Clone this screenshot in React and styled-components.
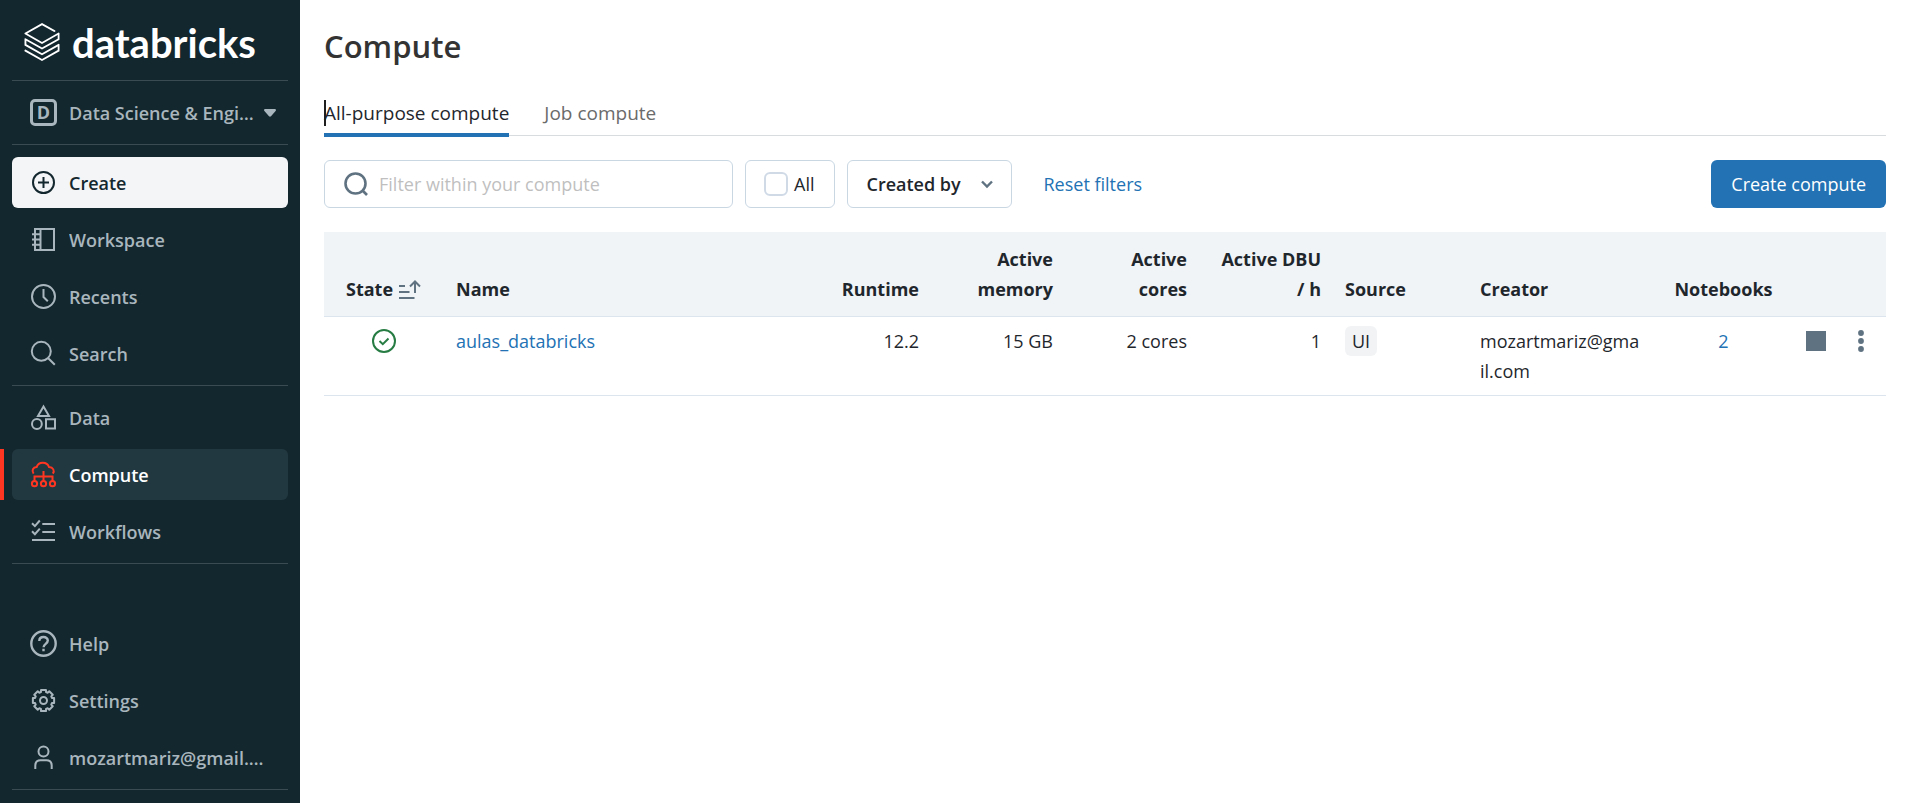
import React from 'react'
import styled, { createGlobalStyle } from 'styled-components'
import { SiDatabricks } from 'react-icons/si'

const GlobalStyle = createGlobalStyle`
  *, *::before, *::after {
    box-sizing: border-box;
  }

  body {
    margin: 0;
    background: #fff;
    color: #1f272d;
    font: 400 18px/30px 'Open Sans', 'Noto Sans', sans-serif;
  }

  button, input, select {
    font: inherit;
    color: inherit;
  }

  a {
    color: #2272b4;
    text-decoration: none;
  }

  svg {
    display: block;
    flex: none;
  }
`

const Page = styled.div`
  display: flex;
  min-height: 100vh;
`

/* sidebar */

const Sidebar = styled.aside`
  display: flex;
  flex-direction: column;
  flex: none;
  width: 300px;
  padding: 0 12px 13px;
  background: #13272e;
  color: #a9b6bd;
`

const Brand = styled.a`
  display: flex;
  align-items: center;
  gap: 11px;
  height: 80px;
  padding: 4px 11px 0;
  color: #fff;
`

const BrandName = styled.span`
  padding-top: 2px;
  font: 700 40px/40px Lato, sans-serif;
`

const Divider = styled.hr`
  flex: none;
  width: 100%;
  height: 1px;
  margin: 0;
  border: 0;
  background: #3a4b52;
`

const Switcher = styled.button`
  display: flex;
  align-items: center;
  gap: 3px;
  height: 63px;
  padding: 0 12px 0 18px;
  border: 0;
  background: none;
  font-weight: 600;
  text-align: left;
  cursor: pointer;
`

const Badge = styled.span`
  flex: none;
  width: 27px;
  height: 27px;
  margin-right: 9px;
  border: 3px solid;
  border-radius: 5px;
  font-weight: 700;
  line-height: 21px;
  text-align: center;
`

const Truncated = styled.span`
  min-width: 0;
  overflow: hidden;
  white-space: nowrap;
  text-overflow: ellipsis;
`

const Nav = styled.nav`
  display: flex;
  flex-direction: column;
  gap: 6px;
  padding-top: ${(props) => (props.$first ? '12px' : '0')};
  margin-top: ${(props) => (props.$bottom ? 'auto' : '0')};
`

const NavItem = styled.a`
  position: relative;
  display: flex;
  align-items: center;
  gap: 12px;
  height: 51px;
  padding: 0 18px;
  border-radius: 6px;
  color: ${(props) => (props.$active ? '#fff' : '#a9b6bd')};
  background: ${(props) => (props.$active ? '#223841' : 'none')};
  font-weight: 600;

  svg {
    color: ${(props) => (props.$active ? '#ff3621' : 'inherit')};
  }

  &::before {
    content: '';
    display: ${(props) => (props.$active ? 'block' : 'none')};
    position: absolute;
    top: 0;
    bottom: 0;
    left: -12px;
    width: 4px;
    background: #ff3621;
  }
`

const CreateItem = styled(NavItem).attrs({ as: 'button' })`
  border: 0;
  background: #f4f5f7;
  color: #13272e;
  text-align: left;
  cursor: pointer;
`

/* main area */

const Main = styled.main`
  flex: 1;
  min-width: 0;
  padding: 24px 33px 24px 24px;
`

const Title = styled.h1`
  margin: 0;
  color: #333;
  font-size: 31px;
  font-weight: 600;
  line-height: 44px;
`

const Tabs = styled.div`
  display: flex;
  gap: 35px;
  height: 48px;
  margin-top: 20px;
  border-bottom: 1px solid #d9dcdf;
`

const Tab = styled.button`
  position: relative;
  height: 49px;
  padding: 5px 0 0;
  border: 0;
  border-bottom: 4px solid ${(props) => (props.$selected ? '#2272b4' : 'transparent')};
  background: none;
  color: ${(props) => (props.$selected ? '#1f272d' : '#6b6b6b')};
  font-size: 19px;
  cursor: pointer;
`

const Caret = styled.i`
  position: absolute;
  top: 12px;
  left: 0;
  width: 2px;
  height: 26px;
  background: #1f1f1f;
`

const Toolbar = styled.div`
  display: flex;
  align-items: center;
  gap: 12px;
  margin: 24px 0;
`

const Box = styled.label`
  display: flex;
  align-items: center;
  height: 48px;
  border: 1px solid #c9d7e3;
  border-radius: 6px;
  background: #fff;
`

const SearchBox = styled(Box)`
  flex: 0 1 409px;
  gap: 10px;
  padding: 0 18px;
  color: #5f7281;
`

const SearchInput = styled.input`
  flex: 1;
  min-width: 0;
  padding: 0;
  border: 0;
  outline: 0;
  background: none;
  color: #1f272d;

  &::placeholder {
    color: #bfbfbf;
    opacity: 1;
  }
`

const CheckBox = styled(Box)`
  gap: 6px;
  padding: 0 20px 0 18px;
`

const Tick = styled.input`
  appearance: none;
  width: 24px;
  height: 24px;
  margin: 0;
  border: 2px solid #d0dae6;
  border-radius: 6px;
`

const SelectBox = styled(Box)`
  gap: 20px;
  padding: 0 18px;
  color: #5f7281;
`

const Select = styled.select`
  appearance: none;
  padding: 0;
  border: 0;
  outline: 0;
  background: none;
  color: #1f272d;
  font-weight: 600;
`

const ResetButton = styled.button`
  padding: 0 19px;
  border: 0;
  background: none;
  color: #2272b4;
  cursor: pointer;
`

const PrimaryButton = styled.button`
  height: 48px;
  margin-left: auto;
  padding: 0 20px;
  border: 0;
  border-radius: 6px;
  background: #2272b4;
  color: #fff;
  cursor: pointer;
`

const Table = styled.table`
  width: 100%;
  table-layout: fixed;
  border-collapse: separate;
  border-spacing: 0;
`

const Th = styled.th`
  width: ${(props) => props.$width || 'auto'};
  padding: 12px;
  padding-left: ${(props) => (props.$align === 'right' ? '18px' : '12px')};
  border-bottom: 1px solid #dce5ee;
  background: #f0f4f7;
  font-weight: 700;
  text-align: ${(props) => props.$align || 'left'};
  vertical-align: bottom;
`

const Td = styled.td`
  padding: 9px 12px;
  border-bottom: 1px solid #dce5ee;
  text-align: ${(props) => props.$align || 'left'};
  vertical-align: top;
  overflow-wrap: anywhere;
`

const SortButton = styled.button`
  display: flex;
  align-items: center;
  gap: 6px;
  padding: 0 0 0 10px;
  border: 0;
  background: none;
  cursor: pointer;

  svg {
    color: #5f7281;
  }
`

const Status = styled.span`
  display: flex;
  align-items: center;
  justify-content: center;
  height: 30px;
  color: #277c43;
`

const Tag = styled.span`
  display: inline-block;
  padding: 0 7px;
  border-radius: 6px;
  background: #f1f3f5;
`

const Actions = styled.div`
  display: flex;
  align-items: center;
  justify-content: space-between;
  height: 30px;
  padding-right: 2px;
`

const IconButton = styled.button`
  padding: 0;
  border: 0;
  background: none;
  color: #5f7281;
  cursor: pointer;
`

/* icons, 27px grid for the sidebar */

const Icon = ({ size = 27, width = 2, children }) => (
  <svg
    width={size}
    height={size}
    viewBox={`0 0 ${size} ${size}`}
    fill="none"
    stroke="currentColor"
    strokeWidth={width}
    aria-hidden="true"
  >
    {children}
  </svg>
)

const CreateIcon = () => (
  <Icon>
    <circle cx="13.5" cy="13.5" r="10.5" />
    <path d="M13.5 8v11M8 13.5h11" />
  </Icon>
)

const WorkspaceIcon = () => (
  <Icon>
    <path d="M5 3h19v21H5zM10.5 3v21M2 8.2h8.5M2 13.5h8.5M2 18.8h8.5" />
  </Icon>
)

const RecentsIcon = () => (
  <Icon>
    <circle cx="13.5" cy="13.5" r="11.5" />
    <path d="M13.5 6v8l4.3 4.3" />
  </Icon>
)

const SearchIcon = () => (
  <Icon>
    <circle cx="11.3" cy="11.3" r="9.5" />
    <path d="M18 18l6.8 6.8" />
  </Icon>
)

const DataIcon = () => (
  <Icon>
    <path d="M13.5 2.5L8 12h11z" />
    <circle cx="6.9" cy="20" r="4.9" />
    <path d="M16 15.3h9v9.2h-9z" />
  </Icon>
)

const ComputeIcon = () => (
  <Icon>
    <path d="M3.6 12.7C1.2 9.4 3.2 6.3 6.6 6.1 8.4.3 17 .2 19 6c4.2.2 6 3.9 3.8 6.7" />
    <path d="M13.5 10v10M4.5 20v-4.6h18V20" />
    <circle cx="4.5" cy="22.7" r="2.6" />
    <circle cx="13.5" cy="22.7" r="2.6" />
    <circle cx="22.5" cy="22.7" r="2.6" />
  </Icon>
)

const WorkflowsIcon = () => (
  <Icon>
    <path d="M2 5.2l2.9 2.9L9.8 2.5M2 13.3l2.9 2.9 4.9-5.6M12.3 6H25M12.3 14H25M2 22h23" />
  </Icon>
)

const HelpIcon = () => (
  <Icon width={2.4}>
    <circle cx="13.5" cy="13.5" r="12.2" />
    <path d="M9.3 10.9c0-5.2 8.5-5 8.5-.3 0 3.3-4.2 3.2-4.2 6.6M13.5 18.8v2.5" />
  </Icon>
)

// eight teeth, four corners each: [degrees from the tooth's middle, radius]
const toothCorners = [[-13, 10.9], [13, 10.9], [17, 8.8], [28, 8.8]]

const gearPoints = Array.from({ length: 8 }, (_, tooth) =>
  toothCorners.map(([offset, radius]) => {
    const angle = ((tooth * 45 + offset) * Math.PI) / 180
    return `${13.5 + radius * Math.sin(angle)},${13.5 - radius * Math.cos(angle)}`
  })
)
  .flat()
  .join(' ')

const SettingsIcon = () => (
  <Icon>
    <polygon points={gearPoints} strokeLinejoin="round" />
    <circle cx="13.5" cy="13.5" r="3.5" />
  </Icon>
)

const UserIcon = () => (
  <Icon>
    <circle cx="13.5" cy="7.5" r="5" />
    <path d="M5.3 25v-3.5c0-3.2 2-5.2 5.2-5.2h6c3.2 0 5.2 2 5.2 5.2V25" />
  </Icon>
)

const mainLinks = [
  { label: 'Workspace', icon: WorkspaceIcon },
  { label: 'Recents', icon: RecentsIcon },
  { label: 'Search', icon: SearchIcon },
]

const dataLinks = [
  { label: 'Data', icon: DataIcon },
  { label: 'Compute', icon: ComputeIcon, active: true },
  { label: 'Workflows', icon: WorkflowsIcon },
]

const userLinks = [
  { label: 'Help', icon: HelpIcon },
  { label: 'Settings', icon: SettingsIcon },
  { label: 'mozartmariz@gmail.com', icon: UserIcon },
]

const clusters = [
  {
    name: 'aulas_databricks',
    runtime: '12.2',
    memory: '15 GB',
    cores: '2 cores',
    dbu: '1',
    source: 'UI',
    creator: 'mozartmariz@gmail.com',
    notebooks: 2,
  },
]

const NavLinks = ({ items }) =>
  items.map(({ label, icon: ItemIcon, active }) => (
    <NavItem key={label} href="#" $active={active} aria-current={active ? 'page' : undefined}>
      <ItemIcon />
      <Truncated>{label}</Truncated>
    </NavItem>
  ))

const SideMenu = () => (
  <Sidebar>
    <Brand href="#">
      <SiDatabricks size={38} aria-hidden="true" />
      <BrandName>databricks</BrandName>
    </Brand>
    <Divider />
    <Switcher type="button">
      <Badge aria-hidden="true">D</Badge>
      <Truncated>Data Science &amp; Engineering</Truncated>
      <svg width="12" height="8" viewBox="0 0 12 8" fill="currentColor" aria-hidden="true">
        <path d="M1.2 0h9.6c1 0 1.5 1.2.8 1.9L7 7.2c-.6.6-1.4.6-2 0L.4 1.9C-.3 1.2.2 0 1.2 0z" />
      </svg>
    </Switcher>
    <Divider />
    <Nav $first>
      <CreateItem type="button">
        <CreateIcon />
        Create
      </CreateItem>
      <NavLinks items={mainLinks} />
      <Divider />
      <NavLinks items={dataLinks} />
      <Divider />
    </Nav>
    <Nav $bottom>
      <NavLinks items={userLinks} />
      <Divider />
    </Nav>
  </Sidebar>
)

const Filters = () => (
  <Toolbar>
    <SearchBox>
      <Icon size={26} width={2.6}>
        <circle cx="12.5" cy="12.5" r="10" />
        <path d="M19.5 19.5l4.5 4.5" />
      </Icon>
      <SearchInput type="search" aria-label="Filter" placeholder="Filter within your compute" />
    </SearchBox>
    <CheckBox>
      <Tick type="checkbox" />
      All
    </CheckBox>
    <SelectBox>
      <Select aria-label="Created by">
        <option>Created by</option>
      </Select>
      <Icon size={12} width={2.4}>
        <path d="M1 3.5l5 5 5-5" />
      </Icon>
    </SelectBox>
    <ResetButton type="button">Reset filters</ResetButton>
    <PrimaryButton type="button">Create compute</PrimaryButton>
  </Toolbar>
)

const ClusterTable = () => (
  <Table>
    <thead>
      <tr>
        <Th $width="120px">
          <SortButton type="button">
            State
            <Icon size={22}>
              <path d="M0 8h6M0 14h10.5M0 20h15.500M16 15V4M11 8.500L16 3.500l5 5" />
            </Icon>
          </SortButton>
        </Th>
        <Th>Name</Th>
        <Th $width="134px" $align="right">Runtime</Th>
        <Th $width="134px" $align="right">Active memory</Th>
        <Th $width="134px" $align="right">Active cores</Th>
        <Th $width="134px" $align="right">Active DBU / h</Th>
        <Th $width="135px">Source</Th>
        <Th $width="185px">Creator</Th>
        <Th $width="141px" $align="center">Notebooks</Th>
        <Th $width="92px" aria-label="Actions" />
      </tr>
    </thead>
    <tbody>
      {clusters.map((cluster) => (
        <tr key={cluster.name}>
          <Td>
            <Status role="img" aria-label="Running">
              <Icon size={24}>
                <circle cx="12" cy="12" r="11" />
                <path d="M7.5 12l3.3 3.2 5.7-5.7" />
              </Icon>
            </Status>
          </Td>
          <Td>
            <a href="#">{cluster.name}</a>
          </Td>
          <Td $align="right">{cluster.runtime}</Td>
          <Td $align="right">{cluster.memory}</Td>
          <Td $align="right">{cluster.cores}</Td>
          <Td $align="right">{cluster.dbu}</Td>
          <Td>
            <Tag>{cluster.source}</Tag>
          </Td>
          <Td>{cluster.creator}</Td>
          <Td $align="center">
            <a href="#">{cluster.notebooks}</a>
          </Td>
          <Td>
            <Actions>
              <IconButton type="button" aria-label="Stop">
                <svg width="20" height="20" viewBox="0 0 20 20" fill="currentColor">
                  <path d="M0 0h20v20H0z" />
                </svg>
              </IconButton>
              <IconButton type="button" aria-label="More">
                <svg width="22" height="22" viewBox="0 0 22 22" fill="currentColor">
                  <circle cx="11" cy="3" r="2.9" />
                  <circle cx="11" cy="11" r="2.9" />
                  <circle cx="11" cy="19" r="2.9" />
                </svg>
              </IconButton>
            </Actions>
          </Td>
        </tr>
      ))}
    </tbody>
  </Table>
)

const App = () => {
  return (
    <React.Fragment>
      <GlobalStyle />
      <Page>
        <SideMenu />
        <Main>
          <Title>Compute</Title>
          <Tabs role="tablist">
            <Tab type="button" role="tab" aria-selected="true" $selected>
              <Caret />
              All-purpose compute
            </Tab>
            <Tab type="button" role="tab" aria-selected="false">
              Job compute
            </Tab>
          </Tabs>
          <Filters />
          <ClusterTable />
        </Main>
      </Page>
    </React.Fragment>
  )
}

export default App
